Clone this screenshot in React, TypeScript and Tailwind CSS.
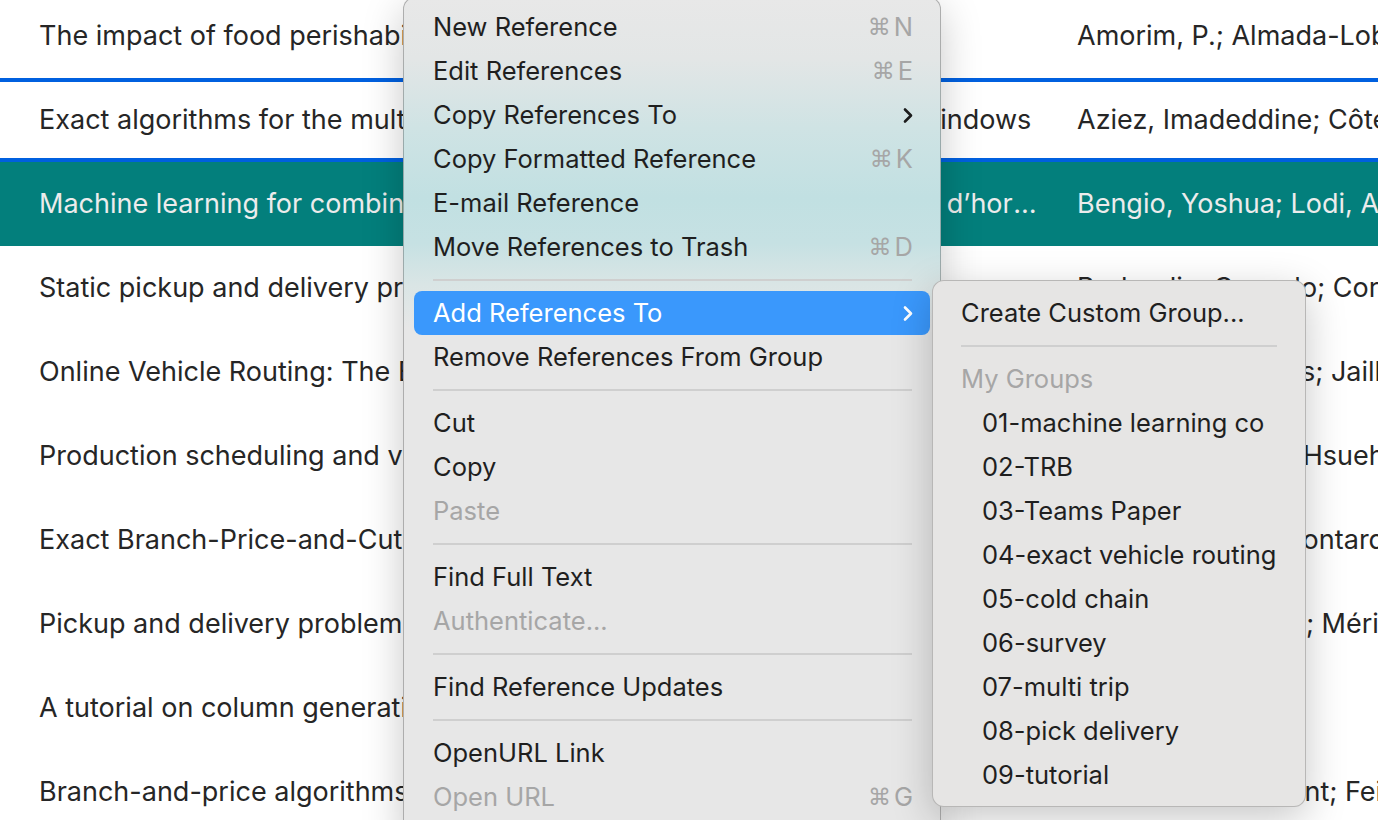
import React from "react";

const rows = [
  { title: "The impact of food perishability issues in the vehicle routing problem", authors: "Amorim, P.; Almada-Lobo, B." },
  { title: "Exact algorithms for the multi-pickup and delivery problem with time windows", authors: "Aziez, Imadeddine; Côté, Jean-François; Coelho, Leandro C." },
  { title: "Machine learning for combinatorial optimization: a methodological tour d’horizon", authors: "Bengio, Yoshua; Lodi, Andrea; Prouvost, Antoine", selected: true },
  { title: "Static pickup and delivery problems: a classification scheme and survey", authors: "Berbeglia, Gerardo; Cordeau, Jean-François" },
  { title: "Online Vehicle Routing: The Edge of Optimization in Large-Scale Applications", authors: "Bertsimas, Dimitris; Jaillet, Patrick; Martin, Sébastien" },
  { title: "Production scheduling and vehicle routing with time windows for perishable food products", authors: "Chen, Huey-Kuo; Hsueh, Che-Fu; Chang, Mei-Shiang" },
  { title: "Exact Branch-Price-and-Cut Algorithms for Vehicle Routing", authors: "Costa, Luciano; Contardo, Claudio; Desaulniers, Guy" },
  { title: "Pickup and delivery problem with time windows: A survey", authors: "Dell’Amico, Mauro; Mérida, José" },
  { title: "A tutorial on column generation and branch-and-price for vehicle routing problems", authors: "Feillet, Dominique" },
  { title: "Branch-and-price algorithms for the solution of the multi-trip vehicle routing problem", authors: "Franceschi, Vincent; Feillet, Dominique" },
];

type Item =
  | { sep: true }
  | { label: string; key?: string; sub?: boolean; disabled?: boolean; active?: boolean; sep?: false };

const items: Item[] = [
  { label: "New Reference", key: "N" },
  { label: "Edit References", key: "E" },
  { label: "Copy References To", sub: true },
  { label: "Copy Formatted Reference", key: "K" },
  { label: "E-mail Reference" },
  { label: "Move References to Trash", key: "D" },
  { sep: true },
  { label: "Add References To", sub: true, active: true },
  { label: "Remove References From Group" },
  { sep: true },
  { label: "Cut" },
  { label: "Copy" },
  { label: "Paste", disabled: true },
  { sep: true },
  { label: "Find Full Text" },
  { label: "Authenticate...", disabled: true },
  { sep: true },
  { label: "Find Reference Updates" },
  { sep: true },
  { label: "OpenURL Link" },
  { label: "Open URL", key: "G", disabled: true },
];

const groups = [
  "01-machine learning co",
  "02-TRB",
  "03-Teams Paper",
  "04-exact vehicle routing",
  "05-cold chain",
  "06-survey",
  "07-multi trip",
  "08-pick delivery",
  "09-tutorial",
];

function Chevron({ white }: { white?: boolean }) {
  return (
    <svg width="10" height="17" viewBox="0 0 10 17" className={white ? "text-white" : "text-[#1c1c1c]"}>
      <path d="M2 2.5 L8 8.5 L2 14.5" fill="none" stroke="currentColor" strokeWidth="2.6" strokeLinecap="round" strokeLinejoin="round" />
    </svg>
  );
}

function Separator({ left, right }: { left: string; right: string }) {
  return (
    <div className={`h-[22px] flex items-center ${left} ${right}`}>
      <div className="h-[2px] w-full bg-[#cfcfcf]" />
    </div>
  );
}

function App() {
  return (
    <div className="relative h-[820px] w-[1378px] overflow-hidden bg-white font-['Inter','Noto_Sans',sans-serif]">
      {/* reference table */}
      <div className="-mt-[6px] text-[27px]">
        {rows.map((r, i) => (
          <div
            key={i}
            className={`flex h-[84px] items-center whitespace-nowrap ${
              r.selected ? "bg-[#037f7c] text-[#ececec]" : "text-[#262626]"
            } ${i === 1 ? "border-y-4 border-[#0060df]" : ""}`}
          >
            <div className="w-[1077px] shrink-0 truncate pl-[39px] pr-[38px]">{r.title}</div>
            <div className="shrink-0">{r.authors}</div>
          </div>
        ))}
      </div>

      {/* context menu */}
      <div className="absolute left-[403px] top-[-3px] h-[850px] w-[538px] rounded-[12px] border border-black/25 bg-[linear-gradient(180deg,#e8e8e8_0px,#e3e6e6_60px,#cfe3e4_130px,#c1e0e2_200px,#c6e1e3_245px,#d9e5e5_285px,#e7e7e7_330px)] pt-[7px] text-[25.5px] text-[#1f1f1f] shadow-[0_12px_40px_rgba(0,0,0,0.22)]">
        {items.map((it, i) =>
          it.sep ? (
            <Separator key={i} left="ml-[29px]" right="mr-[28px]" />
          ) : (
            <div
              key={i}
              className={`mx-[10px] flex h-[44px] items-center justify-between rounded-[8px] pl-[19px] pr-[17px] ${
                it.active ? "bg-[#3a98fc] text-white" : it.disabled ? "text-[#a6a6a6]" : ""
              }`}
            >
              <span>{it.label}</span>
              {it.key && (
                <span className="flex items-center text-[#a6a6a6]">
                  <span className="font-['DejaVu_Sans',sans-serif] text-[23px]">⌘</span>
                  <span className="ml-[3px]">{it.key}</span>
                </span>
              )}
              {it.sub && <Chevron white={it.active} />}
            </div>
          )
        )}
      </div>

      {/* submenu */}
      <div className="absolute left-[932px] top-[280px] w-[374px] rounded-[12px] border border-black/20 bg-[#e6e5e4] pb-[9px] pt-[10px] text-[25.5px] text-[#1f1f1f] shadow-[0_12px_40px_rgba(0,0,0,0.22)]">
        <div className="flex h-[44px] items-center px-[28px]">Create Custom Group...</div>
        <Separator left="ml-[28px]" right="mr-[28px]" />
        <div className="flex h-[44px] items-center px-[28px] text-[#a6a6a6]">My Groups</div>
        {groups.map((g) => (
          <div key={g} className="flex h-[44px] items-center pl-[49px]">
            {g}
          </div>
        ))}
      </div>
    </div>
  );
}

export default App;
